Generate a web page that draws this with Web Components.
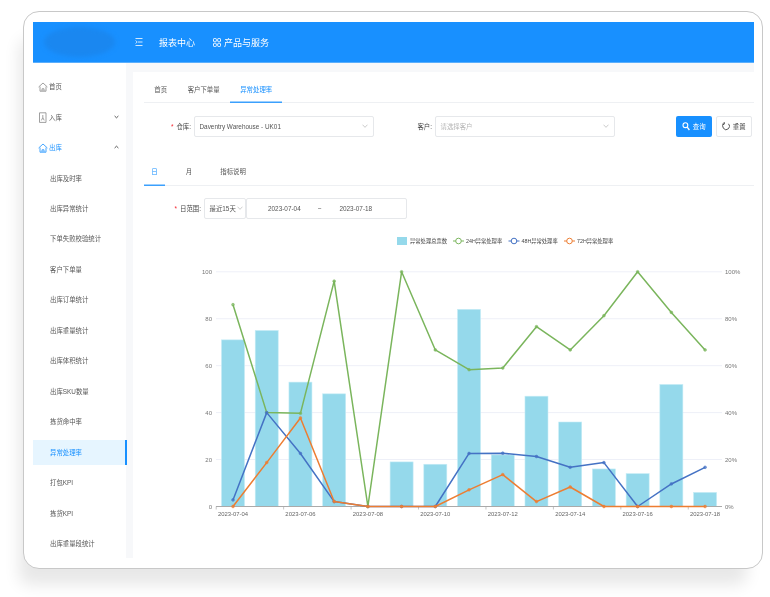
<!DOCTYPE html>
<html lang="zh"><head><meta charset="utf-8"><title>异常处理率</title>
<style>html,body{margin:0;padding:0;background:#fff;width:770px;height:597px;overflow:hidden;font-family:"Liberation Sans","Noto Sans CJK SC",sans-serif}</style>
</head><body>
<app-shell></app-shell>
<script>
const FONT='"Liberation Sans","Noto Sans CJK SC",sans-serif';
class TopBar extends HTMLElement{constructor(){super();this.attachShadow({mode:'open'}).innerHTML=`<style>
:host{display:flex;align-items:center;height:41px;background:#1890ff;color:#fff;font-size:9px;position:relative;border-bottom:1px solid #5aaefc;box-sizing:border-box}
.logo{width:71px;height:30px;border-radius:50%;background:#1a87f0;filter:blur(2px);margin-left:11px}
.h{margin-left:20px;display:flex}.t{margin-left:16px}.g{margin-left:18px;display:flex}.s{margin-left:3px}
</style><div class="logo"></div>
<svg class="h" width="8" height="10" viewBox="0 0 8 10" fill="none" stroke="#fff" stroke-width="1"><path d="M.5 1.5h7M3 5h4.5M.5 8.5h7M.7 3.5l1.5 1.5-1.5 1.5" stroke-width=".8"/></svg>
<span class="t">报表中心</span>
<svg class="g" width="8" height="9" viewBox="0 0 8 9" fill="none" stroke="#fff" stroke-width=".9"><rect x=".5" y=".5" width="2.8" height="3.2" rx=".7"/><rect x="4.7" y=".5" width="2.8" height="3.2" rx=".7"/><rect x=".5" y="5.3" width="2.8" height="3.2" rx=".7"/><rect x="4.7" y="5.3" width="2.8" height="3.2" rx=".7"/></svg>
<span class="s">产品与服务</span>`}}
customElements.define('top-bar',TopBar);

const ICONS={home:'<path d="M.6 5 5 1l4.4 4M2 4.6v4.6h6V4.6M4 9V6.8h2V9"/>',
doc:'<path d="M1.5 .8h6.5v9.6H1.5zM4.8 3v2.5M3.4 8.4 4.8 5.6 6.2 8.4"/>'};
class NavItem extends HTMLElement{constructor(){super();
const icon=this.getAttribute('icon'),arrow=this.getAttribute('arrow'),active=this.hasAttribute('active'),blue=this.hasAttribute('blue');
const c=blue||active?'#1890ff':'#555';
this.attachShadow({mode:'open'}).innerHTML=`<style>
:host{display:block;height:30.47px;padding-top:2.4px;box-sizing:border-box}
.r{position:relative;display:flex;align-items:center;box-sizing:border-box;height:25.5px;font-size:6.4px;color:${c};padding-left:${icon?5:17}px}
.r.a{background:#e6f5ff;border-right:2px solid #1890ff;margin-right:-1px}
svg.i{margin-right:1px;flex:none}
svg.c{position:absolute;right:7px;top:10.5px}
</style><div class="r ${active?'a':''}">${icon?`<svg class="i" width="10" height="${icon=='doc'?11:10}" viewBox="0 0 10 ${icon=='doc'?11:10}" fill="none" stroke="${blue?'#1890ff':'#888'}" stroke-width=".8">${ICONS[icon]}</svg>`:''}<slot></slot>${arrow?`<svg class="c" width="5" height="4" viewBox="0 0 5 4" fill="none" stroke="#555" stroke-width="1"><path d="${arrow=='up'?'M.6 3 2.5 1.2 4.4 3':'M.6 1 2.5 2.8 4.4 1'}"/></svg>`:''}</div>`}}
customElements.define('nav-item',NavItem);

class SideNav extends HTMLElement{constructor(){super();this.attachShadow({mode:'open'}).innerHTML=`<style>:host{display:block;width:93px;flex:none;padding-top:8.5px;background:#fff;box-sizing:border-box;overflow:visible}</style><slot></slot>`}}
customElements.define('side-nav',SideNav);

class TabBar extends HTMLElement{constructor(){super();
this.attachShadow({mode:'open'}).innerHTML=`<style>:host{display:flex;border-bottom:var(--line,1px) solid #eef0f3;height:var(--h,31px);box-sizing:border-box;gap:var(--gap,0);font-size:6.4px;color:#555}</style><slot></slot>`}}
customElements.define('tab-bar',TabBar);
class TabItem extends HTMLElement{constructor(){super();const a=this.hasAttribute('active');
this.attachShadow({mode:'open'}).innerHTML=`<style>:host{display:flex;align-items:center;padding:var(--pt,4px) var(--pad,10.3px) 0;height:calc(100% + 1px);box-sizing:border-box;color:${a?'#1890ff':'#555'};${a?'box-shadow:inset 0 -1.5px 0 #3ba0fd;':''}white-space:nowrap}</style><slot></slot>`}}
customElements.define('tab-item',TabItem);

class FieldLabel extends HTMLElement{constructor(){super();this.attachShadow({mode:'open'}).innerHTML=`<style>:host{display:flex;align-items:center;font-size:6.4px;color:#444;white-space:nowrap;justify-content:flex-end}b{color:#f5222d;font-weight:400;margin-right:3px}</style>${this.hasAttribute('req')?'<b>*</b>':''}<slot></slot>`}}
customElements.define('field-label',FieldLabel);
class SelectBox extends HTMLElement{constructor(){super();const ph=this.hasAttribute('placeholder');
this.attachShadow({mode:'open'}).innerHTML=`<style>:host{display:flex;align-items:center;justify-content:space-between;box-sizing:border-box;height:20.5px;border:1px solid #e6e8eb;border-radius:2px;background:#fff;font-size:6.4px;color:${ph?'#b5b5b5':'#555'};padding:0 var(--pr,5.5px) 0 4.5px;white-space:nowrap}svg{flex:none}</style><slot></slot><svg width="6" height="4" viewBox="0 0 6 4" fill="none" stroke="#aaa" stroke-width=".6"><path d="M.5.7 3 3.3 5.5.7"/></svg>`}}
customElements.define('select-box',SelectBox);
class DateRange extends HTMLElement{constructor(){super();this.attachShadow({mode:'open'}).innerHTML=`<style>:host{display:flex;align-items:center;box-sizing:border-box;height:20.5px;width:161px;border:1px solid #e6e8eb;border-radius:2px;font-size:6.4px;color:#555;padding-left:21px}.m{margin:0 18px 0 17px}</style><span>${this.getAttribute('from')}</span><span class="m">~</span><span>${this.getAttribute('to')}</span>`}}
customElements.define('date-range',DateRange);
class ActBtn extends HTMLElement{constructor(){super();const p=this.hasAttribute('primary');
const ic=p?'<path d="M5.2 5.2 7.4 8" stroke-width="1.3"/><circle cx="3.4" cy="3.2" r="2.4" stroke-width="1.1"/>':'<path d="M2.2 1.4A3.4 3.4 0 1 0 6.5 1.8M2.2 0v2.2h-2" stroke-width=".9"/>';
this.attachShadow({mode:'open'}).innerHTML=`<style>:host{display:flex;align-items:center;justify-content:center;gap:2.5px;box-sizing:border-box;width:36px;height:20.5px;border-radius:2px;font-size:6.4px;${p?'background:#1890ff;color:#fff;':'background:#fff;color:#444;border:1px solid #e6e8eb;'}}</style><svg width="8" height="9" viewBox="0 0 8 9" fill="none" stroke="${p?'#fff':'#444'}">${ic}</svg><slot></slot>`}}
customElements.define('act-btn',ActBtn);

class TrendChart extends HTMLElement{constructor(){super();
const X=i=>233+i*33.72,Y0=506.5,H=234.7,Y=v=>Y0-v/100*H;
const bars=[71,75,53,48,0,19,18,84,22,47,36,16,14,52,6];
const S=[['#7ab55c',[86,40,39.7,96,0,100,66.7,58.3,59,76.6,66.7,81.3,100,82.7,66.7]],
['#4472c4',[2.8,40,22.6,2.1,0,0,0,22.6,22.7,21.3,16.7,18.7,0,9.6,16.7]],
['#ed7d31',[0,18.7,37.7,2.1,0,0,0,7.1,13.6,2.1,8.3,0,0,0,0]]];
let s='';
const t=(x,y,a,fs,txt,col)=>`<text x="${x}" y="${y}" text-anchor="${a}" fill="${col||'#777'}" font-size="${fs}">${txt}</text>`;
[0,20,40,60,80,100].forEach(v=>{const y=Y(v);
if(v)s+=`<line x1="216" x2="722" y1="${y}" y2="${y}" stroke="#eef0f8"/>`;
s+=t(212,y+2.2,'end',6,v)+t(725,y+2.2,'start',6,v+'%');});
bars.forEach((v,i)=>{if(v)s+=`<rect x="${X(i)-11.5}" y="${Y(v)}" width="23" height="${v/100*H}" fill="#95d9eb" stroke="#c5ecf6" stroke-width=".6"/>`});
s+=`<line x1="216" x2="722" y1="${Y0}" y2="${Y0}" stroke="#aaa" stroke-width="1.2"/>`;
for(let i=0;i<=15;i+=2){const x=216.2+i*33.72;s+=`<line x1="${x}" x2="${x}" y1="${Y0}" y2="${Y0+3}" stroke="#aaa" stroke-width=".7"/>`}
for(let i=0;i<15;i+=2)s+=t(X(i),516,'middle',5.9,'2023-07-'+String(4+i).padStart(2,'0'),'#666');
S.forEach(([c,d])=>{s+=`<polyline fill="none" stroke="${c}" stroke-width="1.5" stroke-linejoin="round" points="${d.map((v,i)=>X(i)+','+Y(v)).join(' ')}"/>`;
d.forEach((v,i)=>s+=`<circle cx="${X(i)}" cy="${Y(v)}" r="1.4" fill="${c}" fill-opacity=".75" stroke="${c}" stroke-width=".5"/>`)});
s+=`<rect x="397" y="237" width="10" height="8" fill="#95d9eb"/>`+t(410,243,'start',5.3,'异常处理总票数','#444');
[[453,'24H异常处理率','#7ab55c'],[508.5,'48H异常处理率','#4472c4'],[564,'72H异常处理率','#ed7d31']].forEach(([x,n,c])=>{
s+=`<line x1="${x}" x2="${x+11}" y1="241" y2="241" stroke="${c}" stroke-width="1"/><circle cx="${x+5.5}" cy="241" r="2.8" fill="#fff" stroke="${c}" stroke-width="1"/>`+t(x+13,243,'start',5.3,n,'#444')});
this.attachShadow({mode:'open'}).innerHTML=`<style>:host{display:block;height:299px}svg{display:block;font-family:${FONT}}</style><svg width="621" height="299" viewBox="133 232 621 299">${s}</svg>`}}
customElements.define('trend-chart',TrendChart);

class AppShell extends HTMLElement{constructor(){super();this.attachShadow({mode:'open'}).innerHTML=`<style>
:host{display:block;padding:11px 0 0 23px;width:770px;height:597px;box-sizing:border-box}
.card{width:739.5px;height:558px;box-sizing:border-box;border:1px solid #c8c8c8;border-radius:16px;background:#fff;padding:10px 7.5px 10px 9px;box-shadow:-10px 22px 16px -6px rgba(0,0,0,.095);display:flex;flex-direction:column}
.inner{filter:blur(.4px);display:flex;flex-direction:column;flex:1;min-height:0}
.body{display:flex;flex:1;min-height:0}
.wrap{flex:1;background:#f7f8fa;padding:9px 0 0 7px;display:flex;min-width:0}
main{flex:1;background:#fff;padding-left:11px;min-width:0;display:flex;flex-direction:column}
.row{display:flex;align-items:center}
.f1{margin-top:13px}
.t2{margin-top:18.5px;--h:30.5px;--gap:13.5px;--pad:7.3px;--pt:2px}
.f2{margin-top:12.5px;}
</style><div class="card"><div class="inner"><top-bar></top-bar><div class="body">
<side-nav>
<nav-item icon="home">首页</nav-item><nav-item icon="doc" arrow="down">入库</nav-item><nav-item icon="home" blue arrow="up">出库</nav-item>
<nav-item>出库及时率</nav-item><nav-item>出库异常统计</nav-item><nav-item>下单失败校验统计</nav-item><nav-item>客户下单量</nav-item><nav-item>出库订单统计</nav-item><nav-item>出库重量统计</nav-item><nav-item>出库体积统计</nav-item><nav-item>出库SKU数量</nav-item><nav-item>拣货命中率</nav-item><nav-item active>异常处理率</nav-item><nav-item>打包KPI</nav-item><nav-item>拣货KPI</nav-item><nav-item>出库重量段统计</nav-item>
</side-nav>
<div class="wrap"><main>
<tab-bar><tab-item>首页</tab-item><tab-item>客户下单量</tab-item><tab-item active>异常处理率</tab-item></tab-bar>
<div class="row f1">
<field-label req style="width:47px">仓库:</field-label><select-box style="width:180px;margin-left:3px">Daventry Warehouse - UK01</select-box>
<field-label style="width:58px">客户:</field-label><select-box placeholder style="width:180px;margin-left:3px">请选择客户</select-box>
<act-btn primary style="margin-left:61px">查询</act-btn><act-btn style="margin-left:4px">重置</act-btn>
</div>
<tab-bar class="t2"><tab-item active>日</tab-item><tab-item>月</tab-item><tab-item>指标说明</tab-item></tab-bar>
<div class="row f2"><field-label req style="width:57px">日范围:</field-label><select-box style="width:42px;margin-left:3px;--pr:2px">最近15天</select-box><date-range from="2023-07-04" to="2023-07-18"></date-range></div>
<trend-chart style="margin:13px 0 0 -11px"></trend-chart>
</main></div></div></div></div>`}}
customElements.define('app-shell',AppShell);
</script></body></html>
